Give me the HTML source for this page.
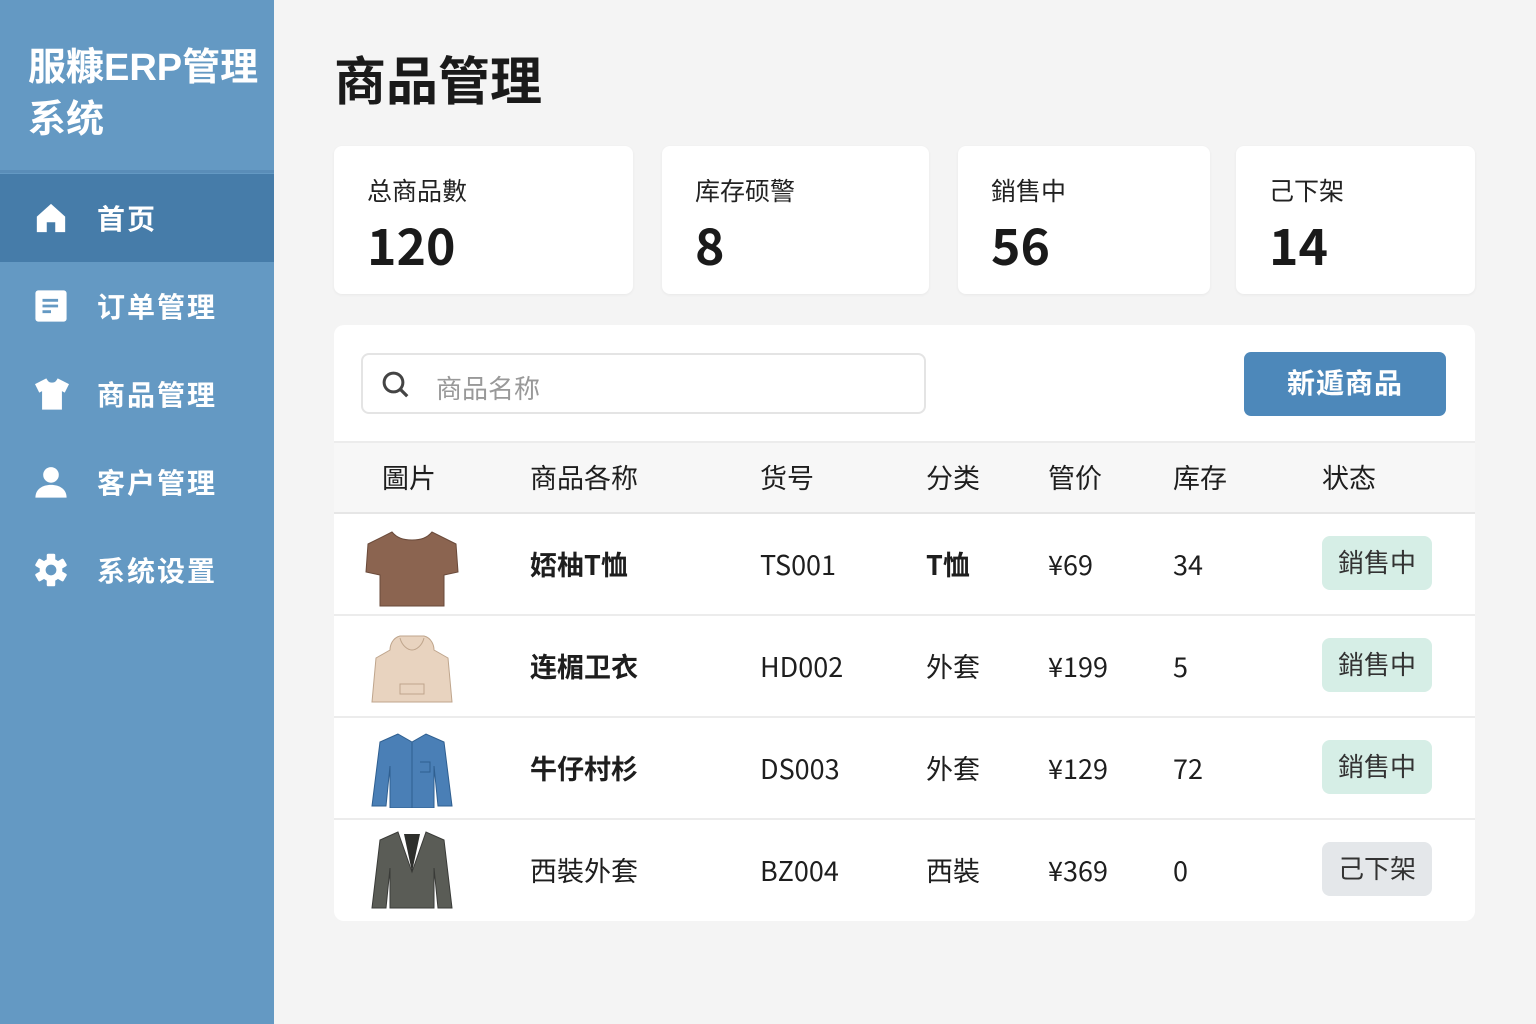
<!DOCTYPE html>
<html><head><meta charset="utf-8"><style>
*{margin:0;padding:0;box-sizing:border-box}
body{width:1536px;height:1024px;background:#f4f4f4;font-family:"Liberation Sans","Noto Sans CJK SC",sans-serif;position:relative;overflow:hidden;color:#1e1e1e}
.sb{position:absolute;left:0;top:0;width:274px;height:1024px;background:#6499c3}
.logo{position:absolute;left:28px;top:42px;color:#fff;font-size:38px;font-weight:700;line-height:52px}
.hr{position:absolute;left:0;top:170px;width:274px;height:3px;background:#5a8db8}
.nav{position:absolute;left:0;width:274px;height:88px;color:#fff;font-size:28px;font-weight:700;display:flex;align-items:center}
.nav svg{position:absolute;left:34px}
.nav span{position:absolute;left:97px;letter-spacing:2px}
.act{background:#467ca9}
h1{position:absolute;left:334px;top:40px;font-size:52px;font-weight:700;color:#1a1a1a}
.card{position:absolute;top:146px;height:148px;background:#fff;border-radius:8px;box-shadow:0 1px 3px rgba(0,0,0,.05)}
.card .l{position:absolute;left:33px;top:26px;font-size:25px;color:#222}
.card .n{position:absolute;left:33px;top:68px;font-size:50px;font-weight:700;color:#1a1a1a;font-family:"Noto Sans CJK SC",sans-serif;line-height:60px}
.panel{position:absolute;left:334px;top:325px;width:1141px;height:596px;background:#fff;border-radius:10px}
.search{position:absolute;left:27px;top:28px;width:565px;height:61px;border:2px solid #e4e4e4;border-radius:8px}
.search span{position:absolute;left:73px;top:14px;font-size:26px;color:#999}
.btn{position:absolute;left:910px;top:27px;width:202px;height:64px;background:#4d88ba;border-radius:7px;color:#fff;font-size:28px;font-weight:700;text-align:center;line-height:64px;letter-spacing:1px}
.thead{position:absolute;left:0;top:116px;width:1141px;height:73px;background:#f7f7f7;border-top:2px solid #ececec;border-bottom:2px solid #e6e6e6}
.c{position:absolute;font-size:27px;white-space:nowrap;font-family:"Noto Sans CJK SC",sans-serif;line-height:40px}
.row .c{top:30px}
.thead .c{top:14px}
.row{position:absolute;left:0;width:1141px;height:102px;border-bottom:2px solid #ececec}
.badge{position:absolute;left:988px;top:22px;width:110px;height:54px;border-radius:8px;font-size:26px;text-align:center;line-height:54px;color:#333}
.g{background:#d6eee6}.gr{background:#e4e7ea}
</style></head><body>
<div class="sb">
<div class="logo">服糠ERP管理<br>系统</div>
<div class="hr"></div>
<div class="nav act" style="top:174px"><svg width="34" height="34" viewBox="0 0 24 24"><path fill="#fff" d="M12 2 2 11v11h7v-7h6v7h7V11z"/></svg><span>首页</span></div>
<div class="nav" style="top:262px"><svg width="34" height="34" viewBox="0 0 24 24"><rect x="1" y="1" width="22" height="22" rx="2" fill="#fff"/><path d="M6 8h11M6 12h11M6 16h6" stroke="#6499c3" stroke-width="2"/></svg><span>订单管理</span></div>
<div class="nav" style="top:350px"><svg width="36" height="34" viewBox="0 0 24 24"><path fill="#fff" d="M8 1 0 5l3 6 2-1v13h14V10l2 1 3-6-8-4c-1 2-2 3-4 3S9 3 8 1z"/></svg><span>商品管理</span></div>
<div class="nav" style="top:438px"><svg width="34" height="34" viewBox="0 0 24 24"><circle cx="12" cy="7" r="5.5" fill="#fff"/><path fill="#fff" d="M1 23c0-6 5-9 11-9s11 3 11 9z"/></svg><span>客户管理</span></div>
<div class="nav" style="top:526px"><svg width="34" height="34" viewBox="0 0 24 24"><g fill="#fff" transform="translate(12 12)"><circle r="8"/><rect x="-3" y="-11.5" width="6" height="23" rx="1"/><rect x="-3" y="-11.5" width="6" height="23" rx="1" transform="rotate(60)"/><rect x="-3" y="-11.5" width="6" height="23" rx="1" transform="rotate(120)"/></g><circle cx="12" cy="12" r="3.8" fill="#6499c3"/></svg><span>系统设置</span></div>
</div>
<h1>商品管理</h1>
<div class="card" style="left:334px;width:299px"><div class="l">总商品數</div><div class="n">120</div></div>
<div class="card" style="left:662px;width:267px"><div class="l">库存硕警</div><div class="n">8</div></div>
<div class="card" style="left:958px;width:252px"><div class="l">銷售中</div><div class="n">56</div></div>
<div class="card" style="left:1236px;width:239px"><div class="l">己下架</div><div class="n">14</div></div>
<div class="panel">
<div class="search"><svg style="position:absolute;left:18px;top:15px" width="30" height="30" viewBox="0 0 24 24"><circle cx="10" cy="10" r="7.5" fill="none" stroke="#444" stroke-width="2.4"/><path d="M15.5 15.5 21 21" stroke="#444" stroke-width="2.6"/></svg><span>商品名称</span></div>
<div class="btn">新遁商品</div>
<div class="thead">
<div class="c" style="left:48px">圖片</div><div class="c" style="left:196px">商品各称</div><div class="c" style="left:426px">货号</div><div class="c" style="left:592px">分类</div><div class="c" style="left:714px">管价</div><div class="c" style="left:839px">库存</div><div class="c" style="left:988px">状态</div>
</div>
<div class="row" style="top:189px">
<svg style="position:absolute;left:30px;top:16px" width="96" height="78" viewBox="0 0 96 78"><path d="M28 2 4 14 2 42l14 3v31h64V45l14-3-2-28L68 2c-5 6-11 8-20 8S33 8 28 2z" fill="#8b6450" stroke="#6a4a3a"/></svg>
<div class="c" style="left:196px;font-weight:700">娝柚T恤</div><div class="c" style="left:426px">TS001</div><div class="c" style="left:592px;font-weight:700">T恤</div><div class="c" style="left:714px">¥69</div><div class="c" style="left:839px">34</div><div class="badge g">銷售中</div></div>
<div class="row" style="top:291px">
<svg style="position:absolute;left:36px;top:18px" width="84" height="70" viewBox="0 0 84 70"><path d="M30 2c-8 2-10 10-10 14L6 24 2 68h80l-4-44-14-8c0-4-2-12-10-14z" fill="#e8d3bf" stroke="#bfa58c"/><path d="M30 4c2 8 8 12 12 12s10-4 12-12M30 50h24v10H30z" fill="none" stroke="#bfa58c"/></svg>
<div class="c" style="left:196px;font-weight:700">连楣卫衣</div><div class="c" style="left:426px">HD002</div><div class="c" style="left:592px">外套</div><div class="c" style="left:714px">¥199</div><div class="c" style="left:839px">5</div><div class="badge g">銷售中</div></div>
<div class="row" style="top:393px">
<svg style="position:absolute;left:36px;top:14px" width="84" height="76" viewBox="0 0 84 76"><path d="M28 2 10 10 2 74h14l4-40v42h44V34l4 40h14L74 10 56 2l-14 8z" fill="#4a7fb6" stroke="#2f5f90"/><path d="M42 10v66M50 30h10v10H50" fill="none" stroke="#2f5f90"/></svg>
<div class="c" style="left:196px;font-weight:700">牛仔村杉</div><div class="c" style="left:426px">DS003</div><div class="c" style="left:592px">外套</div><div class="c" style="left:714px">¥129</div><div class="c" style="left:839px">72</div><div class="badge g">銷售中</div></div>
<div class="row" style="top:495px;border-bottom:none">
<svg style="position:absolute;left:36px;top:10px" width="84" height="80" viewBox="0 0 84 80"><path d="M28 2 10 10 2 78h14l4-40v40h44V38l4 40h14L74 10 56 2l-14 40z" fill="#5a5c56" stroke="#3a3b38"/><path d="M34 4l8 38 8-38z" fill="#2e2f2c"/></svg>
<div class="c" style="left:196px">西裝外套</div><div class="c" style="left:426px">BZ004</div><div class="c" style="left:592px">西裝</div><div class="c" style="left:714px">¥369</div><div class="c" style="left:839px">0</div><div class="badge gr">己下架</div></div>
</div>
</body></html>
